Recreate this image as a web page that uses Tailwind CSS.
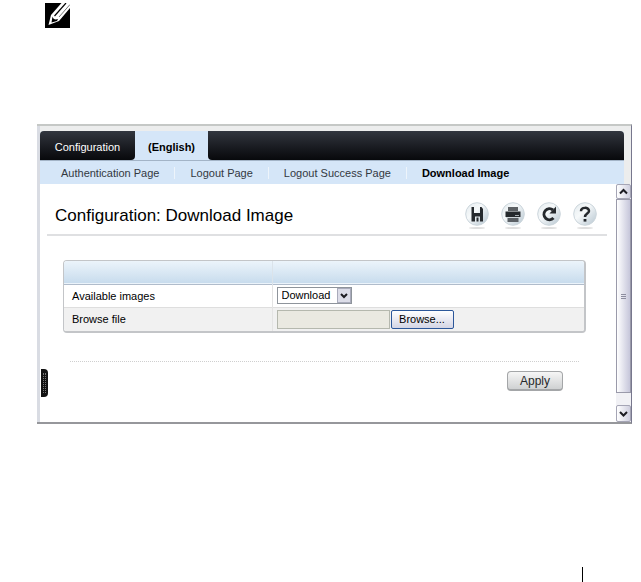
<!DOCTYPE html>
<html lang="en">
<head>
  <meta charset="UTF-8">
  <meta name="viewport" content="width=device-width, initial-scale=1.0">
  <title>Configuration: Download Image</title>
  <script src="https://cdn.jsdelivr.net/npm/@tailwindcss/browser@4"></script>
</head>
<body class="min-h-screen flex flex-col bg-white text-black text-[11px] leading-4 font-['Liberation_Sans',Arial,sans-serif]">

  <!-- Note icon -->
  <div class="h-[124px] pl-[45px] pt-[3px]">
    <svg class="w-[25px] h-[25px]" viewBox="0 0 25 25">
      <path d="M0 0H25V25H0z" fill="#000"/>
      <path d="M16.500 0L6 12L3.500 22L14 18L25 5V0z" fill="#fff"/>
      <path d="M21 0L9.500 13" stroke="#000" stroke-width="1.2" fill="none"/>
      <path d="M25 1.500L14 14" stroke="#777" stroke-width="1" fill="none"/>
      <path d="M7.500 13.500Q8.500 17.500 13 16L12 18L6.500 19.500z" fill="#000"/>
    </svg>
  </div>

  <div class="ml-[37px] mr-[9px] pl-[3px] bg-[#d9dce3] border-t-2 border-b-2 border-t-[#c5c8c6] border-b-[#96979b] border-r border-r-[#77778d]">
    <!-- Tabs -->
    <header class="pt-[5px] pr-[7px] bg-[#eceded]">
      <nav class="flex h-[29px] rounded-t bg-[#d5e6f8] text-[11px]">
        <a href="#" class="w-[95px] pt-0.5 flex items-center justify-center rounded-tl rounded-br bg-linear-to-b from-[#32363f] to-[#08090c] text-white">Configuration</a>
        <a href="#" class="w-[73px] pt-0.5 flex items-center justify-center font-bold">(English)</a>
        <span class="flex-1 rounded-tr rounded-bl bg-linear-to-b from-[#32363f] to-[#08090c]"></span>
      </nav>
      <nav class="flex items-center h-6 pl-[6px] border-t border-[#a3b4c7] bg-[#d5e6f8] text-[#33383f]">
        <a href="#" class="h-3 leading-3 px-[15px]">Authentication Page</a>
        <a href="#" class="h-3 leading-3 px-[15px] border-l border-[#edf4fb]">Logout Page</a>
        <a href="#" class="h-3 leading-3 px-[15px] border-l border-[#edf4fb]">Logout Success Page</a>
        <a href="#" class="h-3 leading-3 px-[15px] border-l border-[#edf4fb] font-bold text-black">Download Image</a>
      </nav>
    </header>

    <div class="flex">
      <main class="relative flex-1 bg-white pl-[7px] pr-[9px] pb-[31px]">
        <div class="flex items-center justify-between h-[52px] pt-3.5 pl-2 pr-[10px] border-b-2 border-[#dfe0e2]">
          <h1 class="text-[17px] leading-5">Configuration: Download Image</h1>
          <div class="flex gap-3">
            <button type="button" aria-label="Save">
              <svg class="w-6 h-7" viewBox="0 0 24 28">
                <defs>
                  <linearGradient id="disc" x1="0" y1="0" x2="1" y2="1">
                    <stop offset="0" stop-color="#e3eaee"/><stop offset=".4" stop-color="#f6f9fa"/><stop offset="1" stop-color="#b6c5d0"/>
                  </linearGradient>
                </defs>
                <ellipse cx="12" cy="26" rx="8" ry="1" fill="#dedede"/>
                <circle cx="12" cy="12" r="11.3" fill="url(#disc)" stroke="#ccd6dc"/>
                <path d="M6.500 5h2.500v6h6V5h1.500l1.500 2v12.500h-3v-5h-5v5H6.500z" fill="#25292d"/>
                <path d="M11.500 15.500h2v4h-2z" fill="#25292d"/>
              </svg>
            </button>
            <button type="button" aria-label="Print">
              <svg class="w-6 h-7" viewBox="0 0 24 28">
                <ellipse cx="12" cy="26" rx="8" ry="1" fill="#dedede"/>
                <circle cx="12" cy="12" r="11.3" fill="url(#disc)" stroke="#ccd6dc"/>
                <path d="M7 5h10v4H7z" fill="#5d6165"/>
                <path d="M4.500 9.500h15v5.500h-15z" fill="#25292d"/>
                <path d="M6.500 16h11v4h-11z" fill="#5b6065"/>
                <path d="M5 15.500h14" stroke="#cfd6da"/>
                <path d="M14 13.500h4" stroke="#a4abb0"/>
              </svg>
            </button>
            <button type="button" aria-label="Refresh">
              <svg class="w-6 h-7" viewBox="0 0 24 28">
                <ellipse cx="12" cy="26" rx="8" ry="1" fill="#dedede"/>
                <circle cx="12" cy="12" r="11.3" fill="url(#disc)" stroke="#ccd6dc"/>
                <path d="M16 8A5.500 5.500 0 1 0 16.500 16" fill="none" stroke="#25292d" stroke-width="3"/>
                <path d="M19 4.500v7h-6.500z" fill="#25292d"/>
              </svg>
            </button>
            <button type="button" aria-label="Help">
              <svg class="w-6 h-7" viewBox="0 0 24 28">
                <ellipse cx="12" cy="26" rx="8" ry="1" fill="#dedede"/>
                <circle cx="12" cy="12" r="11.3" fill="url(#disc)" stroke="#ccd6dc"/>
                <path d="M8 9.200C8 4.800 16 4.800 16 9C16 11.600 12 11.600 12 15" fill="none" stroke="#25292d" stroke-width="2.5"/>
                <path d="M10.600 17h2.800v2.600h-2.800z" fill="#25292d"/>
              </svg>
            </button>
          </div>
        </div>

        <form class="mt-6 pl-4 pr-[21px]" onsubmit="return false">
          <div class="rounded border border-b-2 border-r-2 border-[#c3c5c8] overflow-hidden">
            <table class="w-full table-fixed border-collapse">
              <thead>
                <tr class="h-[23px] bg-linear-to-b from-[#ecf4fb] to-[#c8dced] border-b border-[#b0bccb]">
                  <th class="w-[208px] border-r border-[#dbe3ea]"></th>
                  <th></th>
                </tr>
              </thead>
              <tbody>
                <tr class="h-[23px]">
                  <td class="pl-2 border-r border-[#e4e4e4]"><label for="image">Available images</label></td>
                  <td class="pl-1">
                    <div class="relative w-[75px]">
                      <select id="image" class="block w-full h-[17px] pl-1 appearance-none border border-[#8e949b] bg-white leading-[15px]">
                        <option>Download</option>
                      </select>
                      <svg class="absolute right-px top-px w-[14px] h-[15px] pointer-events-none" viewBox="0 0 14 15">
                        <rect x=".5" y=".5" width="13" height="14" fill="#dcdde8" stroke="#a9abbb"/>
                        <path d="M4 6l3 3 3-3" fill="none" stroke="#1c1c22" stroke-width="2"/>
                      </svg>
                    </div>
                  </td>
                </tr>
                <tr class="h-6 bg-[#f1f1f1] border-t border-[#dedede]">
                  <td class="pl-2 border-r border-[#e4e4e4]"><label for="file">Browse file</label></td>
                  <td class="pl-1">
                    <div class="flex gap-px">
                      <input id="file" type="text" class="w-[113px] h-[19px] px-1 border border-[#b5b8ae] bg-[#eae9e1]">
                      <button type="button" class="w-[63px] h-[19px] rounded-xs border border-[#2c579a] bg-linear-to-b from-white to-[#d4d5e5] leading-4">Browse...</button>
                    </div>
                  </td>
                </tr>
              </tbody>
            </table>
          </div>
          <div class="mt-7 mx-[7px] border-t border-dotted border-[#cfcfcf]"></div>
          <div class="mt-[9px] mr-[23px] flex justify-end">
            <button type="submit" class="w-14 h-5 rounded-sm border border-b-2 border-[#a4a6a8] bg-linear-to-b from-[#f6f6f6] to-[#cfd1d2] text-xs leading-4 text-[#26282a]">Apply</button>
          </div>
        </form>

        <!-- Drawer handle -->
        <div class="absolute left-px bottom-[25px] w-[7px] h-7 rounded-r-sm bg-[#111] py-1 pl-[2px]">
          <div class="h-full w-[3px] border-x border-dotted border-[#777]"></div>
        </div>
      </main>

      <!-- Scrollbar -->
      <div class="w-[15px] flex flex-col bg-[#f1f1f5]" aria-hidden="true">
        <div class="h-[15px] flex items-center justify-center rounded-xs border border-[#a5a5b5] bg-linear-to-r from-white to-[#cfcfdf]">
          <svg class="w-[9px] h-[9px]" viewBox="0 0 9 9"><path d="M1 6.500L4.500 3L8 6.500" fill="none" stroke="#1c1c22" stroke-width="2"/></svg>
        </div>
        <div class="flex-1 flex flex-col items-center justify-center gap-px border border-[#9a9aaa] bg-linear-to-r from-white to-[#c6c6da]">
          <span class="w-[5px] h-px bg-[#8d8d9f]"></span>
          <span class="w-[5px] h-px bg-[#8d8d9f]"></span>
          <span class="w-[5px] h-px bg-[#8d8d9f]"></span>
        </div>
        <div class="mt-3 h-[17px] flex items-center justify-center rounded-xs border border-[#a5a5b5] bg-linear-to-r from-white to-[#cfcfdf]">
          <svg class="w-[9px] h-[9px]" viewBox="0 0 9 9"><path d="M1 3L4.500 6.500L8 3" fill="none" stroke="#1c1c22" stroke-width="2"/></svg>
        </div>
      </div>
    </div>
  </div>

  <footer class="mt-auto flex justify-end pr-[58px]">
    <div class="w-px h-[15px] bg-black"></div>
  </footer>
</body>
</html>
